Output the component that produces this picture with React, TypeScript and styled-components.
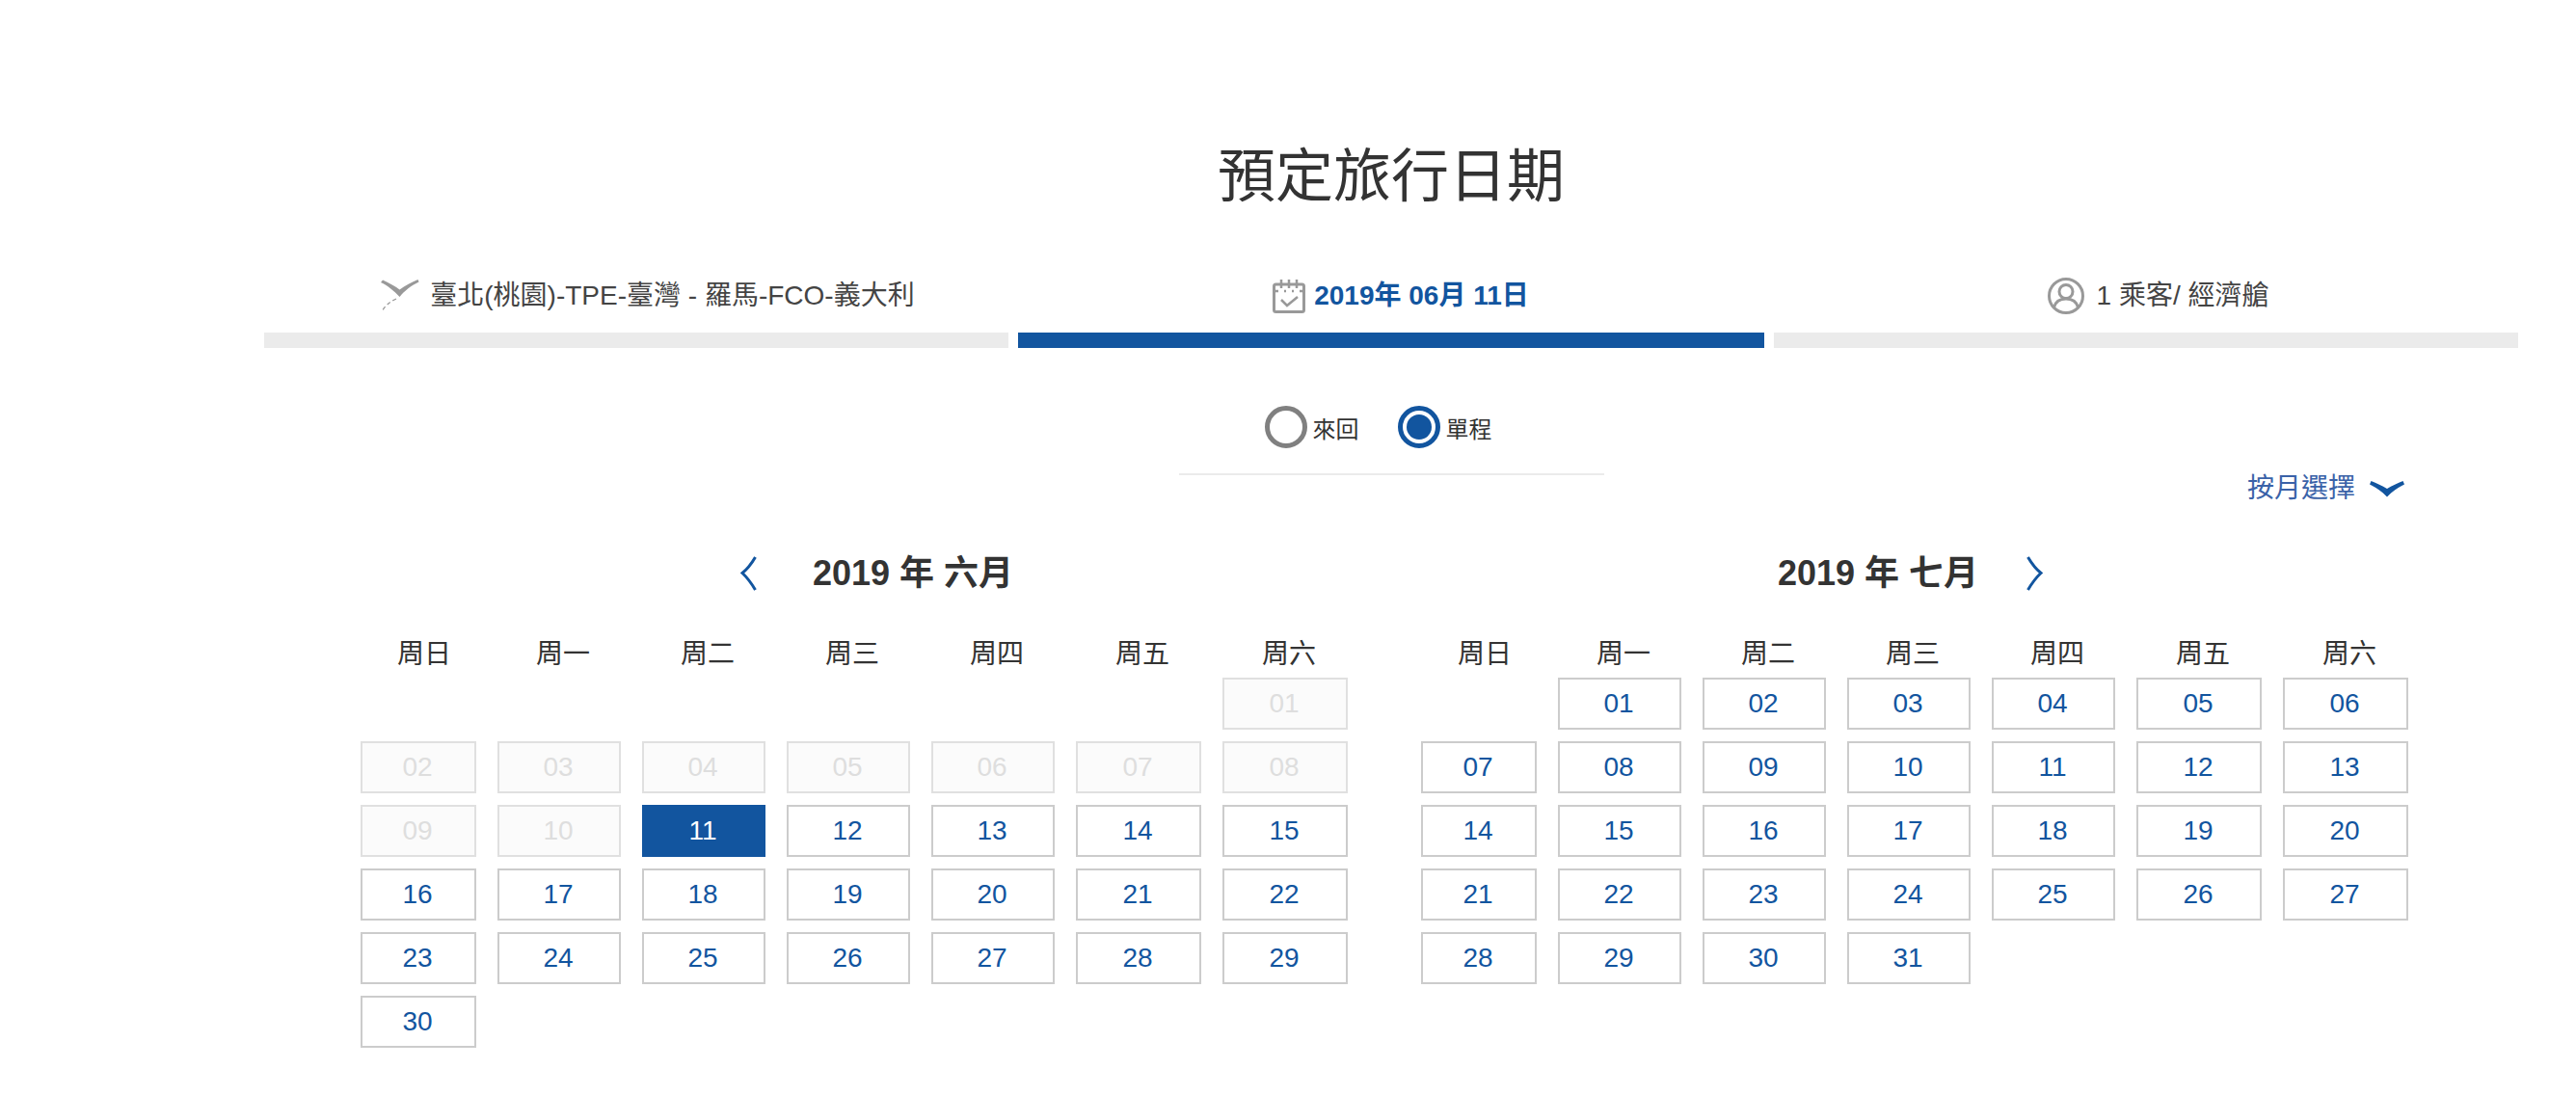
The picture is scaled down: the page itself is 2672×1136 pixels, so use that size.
import styled, { createGlobalStyle } from "styled-components";

const Blue = "#12559f";
const FontStack = `"Liberation Sans", "Noto Sans CJK TC", sans-serif`;
const WEEKDAYS = ["周日", "周一", "周二", "周三", "周四", "周五", "周六"];

const pad = (n: number) => String(n).padStart(2, "0");

const GlobalStyle = createGlobalStyle`
  html, body {
    margin: 0;
    padding: 0;
    background: #fff;
    color: #333;
    font-family: ${FontStack};
  }
`;

const Page = styled.main`
  width: 2672px;
  height: 1136px;
  box-sizing: border-box;
  padding: 149px 60px 0 274px;
  overflow: hidden;
`;

const Title = styled.h1`
  margin: 0;
  height: 70px;
  font-size: 60px;
  font-weight: 400;
  line-height: 70px;
  text-align: center;
  color: #333;
`;

const Tabs = styled.nav`
  display: grid;
  grid-template-columns: 772px 774px 772px;
  column-gap: 10px;
  margin-top: 60px;
`;

const Tab = styled.div<{ $active?: boolean }>`
  display: flex;
  flex-direction: column;
  border-bottom: 16px solid ${({ $active }) => ($active ? Blue : "#ebebeb")};
  color: ${({ $active }) => ($active ? Blue : "#444")};
  font-weight: ${({ $active }) => ($active ? 700 : 400)};
`;

const TabLabel = styled.div<{ $gap: number; $inset: number }>`
  display: flex;
  align-items: center;
  justify-content: center;
  column-gap: ${({ $gap }) => $gap}px;
  height: 56px;
  margin-bottom: 10px;
  padding-left: ${({ $inset }) => $inset}px;
  font-size: 28px;
  line-height: 56px;
`;

const TripType = styled.div`
  display: flex;
  align-items: center;
  box-sizing: border-box;
  width: 441px;
  height: 132px;
  margin: 0 auto;
  padding: 34px 0 0 89px;
  border-bottom: 2px solid #ebebeb;
`;

const RadioOption = styled.label`
  display: flex;
  align-items: center;
  column-gap: 6px;
  margin-right: 40px;
  font-size: 24px;
  color: #333;
`;

const RadioMark = styled.span<{ $checked?: boolean }>`
  display: flex;
  align-items: center;
  justify-content: center;
  box-sizing: border-box;
  width: 44px;
  height: 44px;
  border: 5px solid ${({ $checked }) => ($checked ? Blue : "#808080")};
  border-radius: 50%;

  &::after {
    content: "";
    display: ${({ $checked }) => ($checked ? "block" : "none")};
    width: 26px;
    height: 26px;
    border-radius: 50%;
    background: ${Blue};
  }
`;

const MonthPicker = styled.div`
  display: flex;
  align-items: center;
  justify-content: flex-end;
  column-gap: 15px;
  height: 26px;
  margin-top: 1px;
  padding-right: 118px;
  font-size: 28px;
  line-height: 26px;
  color: #3a62a8;
`;

const Calendars = styled.div`
  display: flex;
  column-gap: 76px;
  margin: 55px 0 0 100px;
`;

const Month = styled.section`
  width: 1024px;
`;

const MonthHeader = styled.header<{ $inset: number }>`
  display: flex;
  align-items: center;
  column-gap: ${({ $inset }) => ($inset > 380 ? 58 : 50)}px;
  height: 40px;
  padding-left: ${({ $inset }) => $inset}px;
`;

const MonthName = styled.h2`
  margin: 0;
  font-size: 36px;
  font-weight: 700;
  line-height: 40px;
  color: #333;
`;

const DayGrid = styled.div`
  display: grid;
  grid-template-columns: 120px 128px 128px 128px 128px 130px 130px;
  column-gap: 22px;
  row-gap: 12px;
  grid-auto-rows: 54px;
`;

const WeekGrid = styled(DayGrid)`
  grid-auto-rows: 40px;
  margin: 44px 0 4px;
`;

const Weekday = styled.div`
  padding-left: 8px;
  font-size: 28px;
  line-height: 40px;
  text-align: center;
  color: #333;

  &:first-child {
    padding-left: 12px;
  }
`;

const Day = styled.button<{ $state: "open" | "off" | "picked" }>`
  box-sizing: border-box;
  margin: 0;
  padding: 0 2px 0 0;
  font-family: inherit;
  font-size: 28px;
  line-height: 50px;
  border: 2px solid
    ${({ $state }) =>
      $state === "picked" ? Blue : $state === "off" ? "#e0e0e0" : "#cccccc"};
  border-radius: 0;
  background: ${({ $state }) =>
    $state === "picked" ? Blue : $state === "off" ? "#fbfbfb" : "#fff"};
  color: ${({ $state }) =>
    $state === "picked" ? "#fff" : $state === "off" ? "#dedede" : Blue};
`;

const PlaneIcon = () => (
  <svg width="40" height="35" viewBox="0 0 40 35" fill="none">
    <path
      d="M0 3L2 .5C8 3 15 7 19.500 10.500 25 6 32 3 38.500 0L39.500 2.500C32 6 24 12 19.500 18 14 12 7 6 0 3Z"
      fill="#999"
    />
    <path
      d="M16 20Q5 25 .7 34"
      stroke="#999"
      strokeWidth="1.300"
      strokeDasharray="4 3"
    />
  </svg>
);

const CalendarIcon = () => (
  <svg width="34" height="35" viewBox="0 0 34 35" fill="none" stroke="#999">
    <rect x="1.500" y="5" width="31" height="28.500" rx="2" strokeWidth="3" />
    <path d="M9 0V9M17 0V9M25 0V9" strokeWidth="2.500" />
    <path d="M2 12H6M12 12H14M20 12H22M28 12H32" strokeWidth="2.500" />
    <path d="M9 21L15 27 26 18" strokeWidth="2.500" />
  </svg>
);

const PersonIcon = () => (
  <svg width="38" height="38" viewBox="0 0 38 38" fill="none" stroke="#999" strokeWidth="3">
    <circle cx="19" cy="19" r="17.500" />
    <circle cx="19" cy="14.500" r="7" />
    <path d="M6.500 31C8 25 12 22 19 22S30 25 31.500 31" />
  </svg>
);

const ChevronLeft = () => (
  <svg width="17" height="36" viewBox="0 0 17 36" fill="none">
    <path d="M15.500 1Q9 12 2 17.500 9 24 15.500 35" stroke={Blue} strokeWidth="3" />
  </svg>
);

const ChevronRight = () => (
  <svg width="17" height="36" viewBox="0 0 17 36" fill="none">
    <path d="M1.500 1Q8 12 15 17.500 8 24 1.500 35" stroke={Blue} strokeWidth="3" />
  </svg>
);

const ChevronDown = () => (
  <svg width="36" height="17" viewBox="0 0 36 17">
    <path
      d="M0 3.500L1.500 0C7 2 13 5 18 8 23 5 29 2 34.500 0L36 3.500C29 7 23 11 18 16.500 13 11 7 7 0 3.500Z"
      fill={Blue}
    />
  </svg>
);

interface MonthCalendarProps {
  name: string;
  leading: number;
  length: number;
  offUntil?: number;
  picked?: number;
  inset: number;
  side: "prev" | "next";
}

const MonthCalendar = ({
  name,
  leading,
  length,
  offUntil = 0,
  picked,
  inset,
  side,
}: MonthCalendarProps) => (
  <Month>
    <MonthHeader $inset={inset}>
      {side === "prev" && <ChevronLeft />}
      <MonthName>{name}</MonthName>
      {side === "next" && <ChevronRight />}
    </MonthHeader>
    <WeekGrid>
      {WEEKDAYS.map((day) => (
        <Weekday key={day}>{day}</Weekday>
      ))}
    </WeekGrid>
    <DayGrid>
      {Array.from({ length: leading }, (_, i) => (
        <div key={`blank-${i}`} />
      ))}
      {Array.from({ length }, (_, i) => i + 1).map((d) => (
        <Day
          key={d}
          $state={d === picked ? "picked" : d <= offUntil ? "off" : "open"}
        >
          {pad(d)}
        </Day>
      ))}
    </DayGrid>
  </Month>
);

export default function App() {
  return (
    <Page>
      <GlobalStyle />
      <Title>預定旅行日期</Title>
      <Tabs>
        <Tab>
          <TabLabel $gap={11} $inset={24}>
            <PlaneIcon />
            <span>臺北(桃園)-TPE-臺灣 - 羅馬-FCO-義大利</span>
          </TabLabel>
        </Tab>
        <Tab $active>
          <TabLabel $gap={9} $inset={20}>
            <CalendarIcon />
            <span>2019年 06月 11日</span>
          </TabLabel>
        </Tab>
        <Tab>
          <TabLabel $gap={13} $inset={25}>
            <PersonIcon />
            <span>1 乘客/ 經濟艙</span>
          </TabLabel>
        </Tab>
      </Tabs>
      <TripType>
        <RadioOption>
          <RadioMark />
          來回
        </RadioOption>
        <RadioOption>
          <RadioMark $checked />
          單程
        </RadioOption>
      </TripType>
      <MonthPicker>
        <span>按月選擇</span>
        <ChevronDown />
      </MonthPicker>
      <Calendars>
        <MonthCalendar
          name="2019 年 六月"
          leading={6}
          length={30}
          offUntil={10}
          picked={11}
          inset={394}
          side="prev"
        />
        <MonthCalendar
          name="2019 年 七月"
          leading={1}
          length={31}
          inset={370}
          side="next"
        />
      </Calendars>
    </Page>
  );
}
